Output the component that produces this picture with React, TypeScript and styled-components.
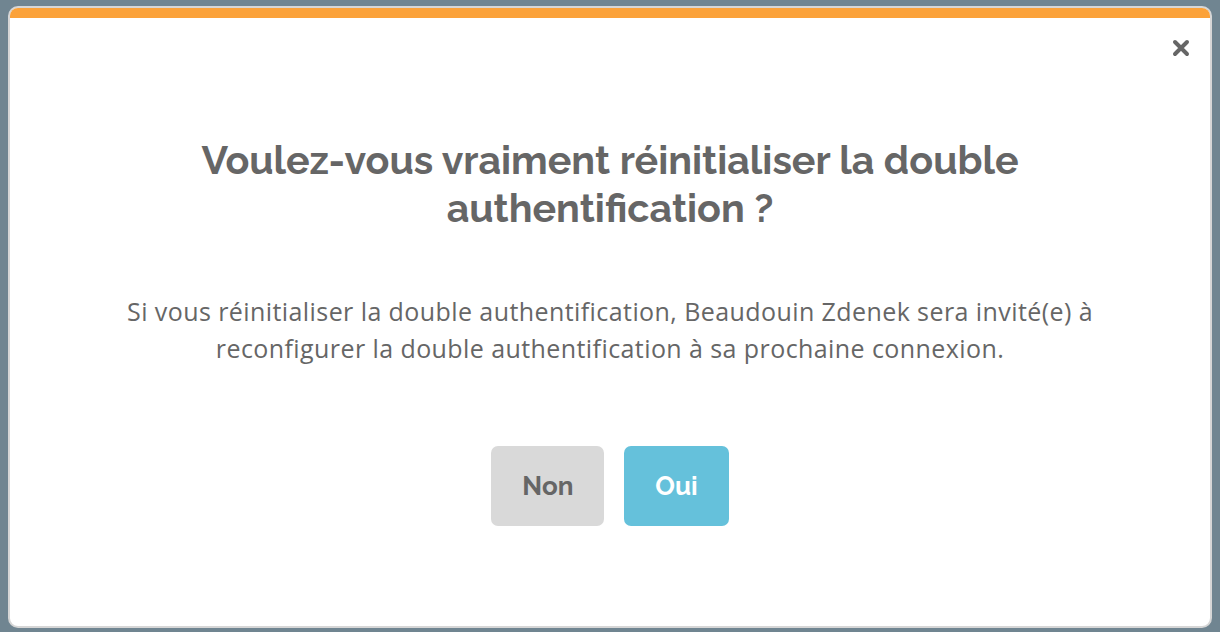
import * as React from 'react';
import styled, { createGlobalStyle } from 'styled-components';

const Global = createGlobalStyle`
    html, body {
        margin: 0;
        padding: 0;
    }
    body {
        background: #708591;
        font-family: "Open Sans", "Liberation Sans", sans-serif;
    }
`;

const Page = styled.div`
    box-sizing: border-box;
    width: 1220px;
    height: 632px;
    padding: 6px 8px 4px 8px;
    display: flex;
`;

const Modal = styled.div`
    box-sizing: border-box;
    flex: 1;
    display: flex;
    flex-direction: column;
    background: #fff;
    border: 2px solid #d6d6d6;
    border-radius: 10px;
    overflow: hidden;
`;

const TopBar = styled.div`
    height: 10px;
    background: #fba23a;
    flex-shrink: 0;
`;

const Header = styled.div`
    display: flex;
    justify-content: flex-end;
    padding: 21px 20px 0 0;
`;

const Close = styled.button`
    border: 0;
    background: none;
    padding: 0;
    width: 18px;
    height: 18px;
    cursor: pointer;
    display: flex;
    align-items: center;
    justify-content: center;
`;

const Body = styled.div`
    display: flex;
    flex-direction: column;
    align-items: center;
    text-align: center;
    padding: 0 100px;
`;

const Title = styled.h2`
    margin: 79px 0 0;
    font-family: "Raleway", "Lato", "Open Sans", sans-serif;
    font-weight: 700;
    font-size: 39.4px;
    line-height: 48px;
    color: #666;
    max-width: 860px;
`;

const Text = styled.p`
    margin: 61px 0 0;
    font-size: 25px;
    letter-spacing: 0.42px;
    line-height: 37px;
    color: #666;
    max-width: 1000px;
`;

const Actions = styled.div`
    display: flex;
    gap: 20px;
    margin-top: 79px;
`;

const Button = styled.button<{primary?: boolean}>`
    height: 80px;
    padding: 0 31px;
    border: 0;
    border-radius: 7px;
    font-family: "Raleway", "Lato", "Open Sans", sans-serif;
    font-weight: 700;
    font-size: 26px;
    color: ${props => props.primary ? '#fff' : '#666'};
    background: ${props => props.primary ? '#65c1db' : '#d9d9d9'};
    cursor: pointer;
`;

export default function App() {
    return (
        <Page>
            <Global />
            <Modal>
                <TopBar />
                <Header>
                    <Close aria-label="Fermer">
                        <svg width="18" height="18" viewBox="0 0 18 18">
                            <path d="M3 3 L15 15 M15 3 L3 15" stroke="#666" strokeWidth="4" strokeLinecap="round" />
                        </svg>
                    </Close>
                </Header>
                <Body>
                    <Title>Voulez-vous vraiment réinitialiser la double authentification ?</Title>
                    <Text>
                        Si vous réinitialiser la double authentification, Beaudouin Zdenek sera invité(e) à reconfigurer la double authentification à sa prochaine connexion.
                    </Text>
                    <Actions>
                        <Button>Non</Button>
                        <Button primary>Oui</Button>
                    </Actions>
                </Body>
            </Modal>
        </Page>
    );
}
